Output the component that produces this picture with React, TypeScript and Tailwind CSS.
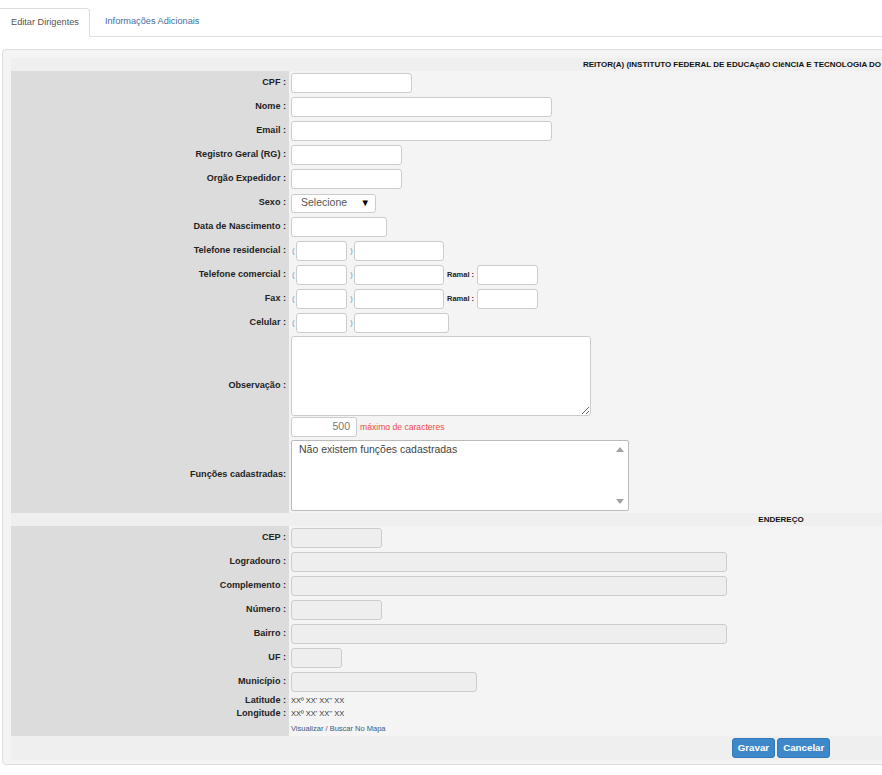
import { ReactNode } from "react";

interface RowProps {
  label: ReactNode;
  children?: ReactNode;
  rowClass?: string;
  labelClass?: string;
}

// one line of the form: grey label cell + value cell
function Row({ label, children, rowClass = "h-6", labelClass = "text-[9.1px]" }: RowProps) {
  return (
    <div className={`flex ${rowClass}`}>
      <div
        className={`w-[278px] shrink-0 bg-[#dcdcdc] flex items-center justify-end pr-[3px] font-bold text-[#222] ${labelClass}`}
      >
        {label}
      </div>
      <div className="flex-1 flex items-center pl-[2px]">{children}</div>
    </div>
  );
}

const Box = ({ w, disabled }: { w: string; disabled?: boolean }) => (
  <input
    type="text"
    disabled={disabled}
    className={`h-5 ${w} border border-[#ccc] rounded-[3px] ${
      disabled ? "bg-[#eeeeee]" : "bg-white"
    }`}
  />
);

function Phone({ second, ramal }: { second: string; ramal?: boolean }) {
  return (
    <div className="flex items-center">
      <span className="text-[8px] text-[#5aa5d6] w-[5px] pl-[1px]">(</span>
      <Box w="w-[51px]" />
      <span className="text-[8px] text-[#5aa5d6] w-[7px] pl-[3px]">)</span>
      <Box w={second} />
      {ramal && (
        <>
          <span className="text-[7.5px] font-bold text-[#222] pl-[3px] pr-[3px]">Ramal :</span>
          <Box w="w-[61px]" />
        </>
      )}
    </div>
  );
}

export default function App() {
  return (
    <div className="w-full overflow-hidden bg-white font-['Liberation_Sans',Arial,sans-serif] min-h-[775px]">
      {/* Tabs */}
      <div className="flex items-end h-[37px] border-b border-[#ddd]">
        <div className="h-[29px] -mb-px bg-white border border-[#ddd] border-b-white border-l-0 rounded-tr-[4px] pl-[11px] pr-[10px] flex items-center text-[9.2px] text-[#555]">
          Editar Dirigentes
        </div>
        <div className="h-[29px] pl-[15px] flex items-center text-[9.2px] text-[#3e6fa6]">
          Informações Adicionais
        </div>
      </div>

      {/* Panel */}
      <div className="mt-3 ml-[2px] w-[1556px] border border-[#ddd] rounded-[4px] bg-[#f4f4f4] pt-2 px-2 pb-[4px]">
        <div className="w-[1540px]">
          <div className="h-[13px] bg-[#efefef] flex items-center pl-[572px] text-[8px] font-bold text-[#111] whitespace-nowrap">
            REITOR(A) (INSTITUTO FEDERAL DE EDUCAçãO CIêNCIA E TECNOLOGIA DO
          </div>

          <Row label="CPF :">
            <Box w="w-[121px]" />
          </Row>
          <Row label="Nome :">
            <Box w="w-[261px]" />
          </Row>
          <Row label="Email :">
            <Box w="w-[261px]" />
          </Row>
          <Row label="Registro Geral (RG) :">
            <Box w="w-[111px]" />
          </Row>
          <Row label="Orgão Expedidor :">
            <Box w="w-[111px]" />
          </Row>
          <Row label="Sexo :">
            <div className="h-[19px] w-[85px] border border-[#ccc] rounded-[3px] bg-white flex items-center justify-between pl-[9px] pr-[5px]">
              <span className="text-[10.5px] text-[#555]">Selecione</span>
              <span className="text-[9.5px] text-black">▼</span>
            </div>
          </Row>
          <Row label="Data de Nascimento :">
            <Box w="w-[96px]" />
          </Row>
          <Row label="Telefone residencial :">
            <Phone second="w-[90px]" />
          </Row>
          <Row label="Telefone comercial :">
            <Phone second="w-[90px]" ramal />
          </Row>
          <Row label="Fax :">
            <Phone second="w-[90px]" ramal />
          </Row>
          <Row label="Celular :">
            <Phone second="w-[95px]" />
          </Row>
          <Row label="Observação :" rowClass="h-[102px]">
            <div className="flex flex-col gap-[1px] self-start pt-[1px]">
              <textarea className="block h-20 w-[300px] border border-[#ccc] rounded-[3px] bg-white" />
              <div className="flex items-center">
                <div className="h-5 w-[66px] border border-[#ccc] rounded-[3px] bg-white flex items-center justify-end pr-[6px] text-[10.5px] text-[#777]">
                  500
                </div>
                <span className="pl-[3px] text-[8.6px] text-[#f0494b]">máximo de caracteres</span>
              </div>
            </div>
          </Row>
          <Row label="Funções cadastradas:" rowClass="h-[76px]">
            <div className="h-[71px] w-[338px] border border-[#bbb] rounded-[2px] bg-white flex">
              <div className="flex-1 pl-[7px] pt-[1px] text-[10.5px] text-[#444]">
                Não existem funções cadastradas
              </div>
              {/* fake scrollbar arrows */}
              <div className="w-[17px] flex flex-col justify-between items-center pt-[6px] pb-[6px]">
                <svg width="8" height="5" viewBox="0 0 8 5">
                  <polygon points="4,0 8,5 0,5" fill="#a3a3a3" />
                </svg>
                <svg width="8" height="5" viewBox="0 0 8 5">
                  <polygon points="0,0 8,0 4,5" fill="#a3a3a3" />
                </svg>
              </div>
            </div>
          </Row>

          <div className="h-[13px] bg-[#efefef] flex items-center justify-center text-[8px] font-bold text-[#111] whitespace-nowrap">
            ENDEREÇO
          </div>

          <Row label="CEP :">
            <Box w="w-[91px]" disabled />
          </Row>
          <Row label="Logradouro :">
            <Box w="w-[436px]" disabled />
          </Row>
          <Row label="Complemento :">
            <Box w="w-[436px]" disabled />
          </Row>
          <Row label="Número :">
            <Box w="w-[91px]" disabled />
          </Row>
          <Row label="Bairro :">
            <Box w="w-[436px]" disabled />
          </Row>
          <Row label="UF :">
            <Box w="w-[51px]" disabled />
          </Row>
          <Row label="Município :">
            <Box w="w-[186px]" disabled />
          </Row>
          <Row label="Latitude :" rowClass="h-[13px]">
            <span className="text-[7.5px] text-[#333]">XXº XX' XX'' XX</span>
          </Row>
          <Row label="Longitude :" rowClass="h-[14px]">
            <span className="text-[7.5px] text-[#333]">XXº XX' XX'' XX</span>
          </Row>
          <Row label="" rowClass="h-[15px]">
            <span className="text-[7.5px] text-[#3c5a7c]">Visualizar / Buscar No Mapa</span>
          </Row>

          {/* Buttons */}
          <div className="h-6 bg-[#efefef] flex items-center justify-center gap-[2px]">
            <button className="h-5 px-[5px] rounded-[3px] bg-[#3d88c9] border border-[#3279b8] text-white text-[9.75px] font-bold">
              Gravar
            </button>
            <button className="h-5 px-[5px] rounded-[3px] bg-[#3d88c9] border border-[#3279b8] text-white text-[9.75px] font-bold">
              Cancelar
            </button>
          </div>
        </div>
      </div>
    </div>
  );
}
